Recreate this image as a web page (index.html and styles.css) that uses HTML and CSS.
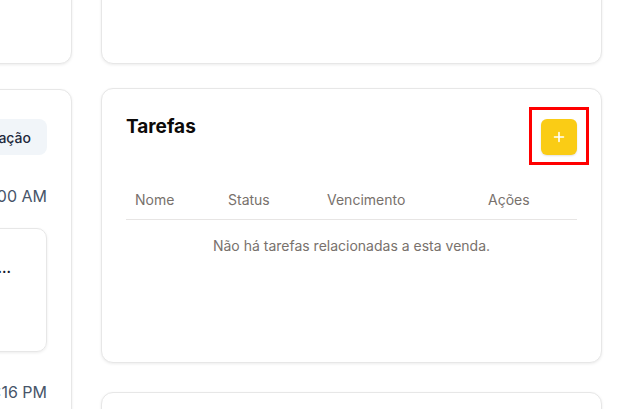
FILE: index.html
```html
<!DOCTYPE html>
<html lang="pt-BR">
<head>
<meta charset="utf-8">
<title>Venda</title>
<link rel="stylesheet" href="styles.css">
</head>
<body>
<div class="page">
  <div class="col col-left">
    <section class="card card-top"></section>
    <section class="card card-timeline">
      <div class="tl-head">
        <h2 class="card-title">Histórico</h2>
        <button class="pill">Nova anotação</button>
      </div>
      <div class="tl-date">15/03/2024 10:00 AM</div>
      <div class="tl-item">
        <div class="tl-item-title"><span class="title-text">Reunião de apresentação da proposta com o cliente...</span></div>
        <div class="tl-item-text">Apresentação da proposta comercial.</div>
      </div>
      <div class="tl-date">14/03/2024 04:16 PM</div>
    </section>
  </div>
  <div class="col col-right">
    <section class="card card-top"></section>
    <section class="card card-tasks">
      <div class="tasks-head">
        <h2 class="card-title">Tarefas</h2>
        <button class="add-btn" aria-label="Adicionar tarefa">
          <svg width="12" height="12" viewBox="0 0 12 12"><path d="M6 1.5v9M1.5 6h9" stroke="#fff" stroke-width="1.6" stroke-linecap="round"/></svg>
        </button>
      </div>
      <div class="table">
        <div class="thead">
          <div class="th">Nome</div>
          <div class="th">Status</div>
          <div class="th">Vencimento</div>
          <div class="th">Ações</div>
        </div>
        <div class="empty">Não há tarefas relacionadas a esta venda.</div>
      </div>
    </section>
    <section class="card card-bottom"></section>
  </div>
</div>
</body>
</html>
```
FILE: styles.css
```css
* { box-sizing: border-box; }
html, body { margin: 0; padding: 0; }
body {
  background: #ffffff;
  font-family: Inter, "Noto Sans", "Liberation Sans", sans-serif;
  overflow: hidden;
  height: 409px;
}
.page {
  display: grid;
  grid-template-columns: 400px 501px;
  column-gap: 29px;
  margin-left: -328px;
  margin-top: -40px;
  align-items: start;
}
.col { display: flex; flex-direction: column; }
.card {
  background: #fff;
  border: 1px solid #e7e7e7;
  border-radius: 12px;
  box-shadow: 0 1px 3px rgba(0,0,0,0.08);
}
.card-top { height: 104px; }
.col-left .card-top { margin-bottom: 25px; }
.col-right .card-top { margin-bottom: 24px; }

.card-title {
  margin: -4px 0 0;
  font-size: 19px;
  font-weight: 650;
  color: #0c0a09;
  line-height: 24px;
}

/* left timeline */
.card-timeline {
  padding: 29px 24px 40px;
  height: 400px;
}
.tl-head {
  display: flex;
  justify-content: space-between;
  align-items: flex-start;
}
.pill {
  height: 36px;
  padding: 0 16px;
  border: 0;
  border-radius: 8px;
  background: #f1f5f9;
  color: #1e293b;
  font-family: inherit;
  font-size: 14px;
  font-weight: 500;
}
.tl-date {
  text-align: right;
  font-size: 16px;
  line-height: 24px;
  color: #475569;
  margin-top: 29px;
}
.tl-item {
  margin-top: 20px;
  height: 124px;
  border: 1px solid #e7e7e7;
  border-radius: 10px;
  box-shadow: 0 1px 3px rgba(0,0,0,0.08);
  padding: 30px 35px 16px 16px;
}
.tl-item-title {
  display: flex;
  justify-content: flex-end;
  font-size: 14px;
  font-weight: 600;
  color: #0f172a;
  white-space: nowrap;
}
.title-text { flex: none; }
.tl-item-text {
  margin-top: 8px;
  font-size: 14px;
  color: #64748b;
  white-space: nowrap;
  overflow: hidden;
  width: 200px;
}
.tl-item + .tl-date { margin-top: 28px; }

/* tasks */
.card-tasks {
  height: 275px;
  padding: 30px 24px 24px;
  margin-bottom: 29px;
}
.tasks-head {
  display: flex;
  justify-content: space-between;
  align-items: flex-start;
}
.add-btn {
  position: relative;
  width: 36px;
  height: 36px;
  border: 0;
  border-radius: 6px;
  background: #facc15;
  box-shadow: 0 1px 2px rgba(0,0,0,0.12);
  display: flex;
  align-items: center;
  justify-content: center;
  padding: 0;
}
.add-btn::after {
  content: "";
  position: absolute;
  left: -12px;
  top: -12px;
  right: -12px;
  bottom: -10px;
  border: 3px solid #ff0000;
}
.table { margin-top: 25px; }
.thead {
  display: grid;
  grid-template-columns: 93px 99px 161px 99px;
  height: 40px;
  align-items: center;
  border-bottom: 1px solid #e7e5e4;
}
.th {
  padding-left: 9px;
  font-size: 14px;
  color: #78716c;
  font-weight: 400;
}
.empty {
  text-align: center;
  padding-top: 16px;
  font-size: 14px;
  line-height: 20px;
  color: #78716c;
}
.card-bottom { height: 120px; }
```
